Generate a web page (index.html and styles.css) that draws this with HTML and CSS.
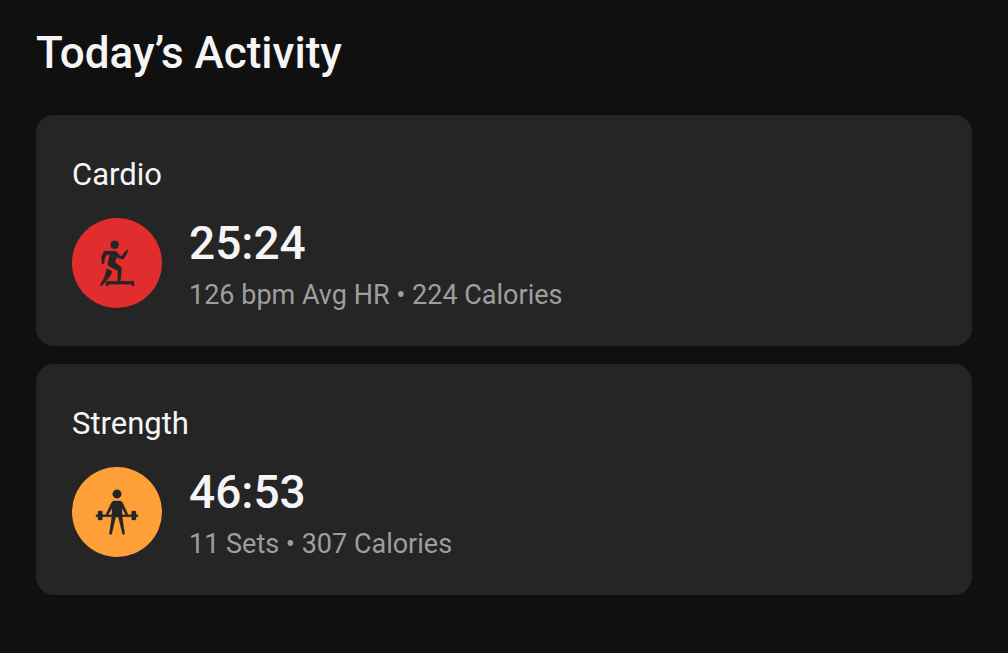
FILE: index.html
```html
<!DOCTYPE html>
<html lang="en">
<head>
    <meta charset="UTF-8">
    <meta name="viewport" content="width=device-width, initial-scale=1.0">
    <title>Today’s Activity</title>
    <link rel="stylesheet" href="styles.css">
</head>
<body>

    <main class="activity">
        <h1>Today’s Activity</h1>

        <section class="card">
            <h2>Cardio</h2>
            <div class="card-row">
                <svg class="icon cardio" viewBox="0 0 270 270" aria-hidden="true">
                    <circle cx="128" cy="80" r="12"/>
                    <path d="M100 99 L129 100 Q136 101 139 107 L144 114 L150 114 L160 100 L168 95 L166 104 L155 123 L151 124 L140 120 L134 117 L129 133 L146 146 Q149 148 149 153 L145 190 H183 Q186 190 186 193 V204 H180 V199 H109 V204 H102 V193 Q102 190 106 190 H137 L138 158 L112 145 Q106 140 108 134 L114 109 L104 110 L98 120 L96 137 L90 137 L89 117 L95 102 Q97 99 100 99 Z"/>
                    <path d="M105 152 L120 160 L116 172 L91 202 Q88 205 84 201 L98 177 Z"/>
                </svg>
                <div class="stats">
                    <p class="time">25:24</p>
                    <p class="details">126 bpm Avg HR • 224 Calories</p>
                </div>
            </div>
        </section>

        <section class="card">
            <h2>Strength</h2>
            <div class="card-row">
                <svg class="icon strength" viewBox="0 0 270 270" aria-hidden="true">
                    <circle cx="135" cy="81" r="13"/>
                    <!-- barbell -->
                    <path d="M72 143 H78 V135 Q78 132 81 132 H88 Q91 132 91 135 V143 H179 V135 Q179 132 182 132 H189 Q192 132 192 135 V143 H198 V149 H192 V156 Q192 159 189 159 H182 Q179 159 179 156 V149 H91 V156 Q91 159 88 159 H81 Q78 159 78 156 V149 H72 Z"/>
                    <path d="M126 102 H144 Q149 102 152 108 L168 142 L162 144 L150 123 L150 146 L158 201 Q157 203 152 202 L139 150 H131 L119 202 Q114 203 112 201 L120 146 L120 123 L107 145 L102 142 L118 108 Q121 102 126 102 Z"/>
                </svg>
                <div class="stats">
                    <p class="time">46:53</p>
                    <p class="details">11 Sets • 307 Calories</p>
                </div>
            </div>
        </section>
    </main>

</body>
</html>
```
FILE: styles.css
```css
body {
    font-family: Roboto, Arial, sans-serif;
    margin: 0;
    background-color: #101010;
    color: #f5f5f5;
}

h1, h2, p {
    margin: 0;
}

.activity {
    padding: 26px 36px 36px;
}

h1 {
    font-size: 44px;
    font-weight: 500;
    line-height: 54px;
    margin-bottom: 35px;
}

.card {
    padding: 36px 36px 34px;
    background-color: #252525;
    border-radius: 18px;
}

.card + .card {
    margin-top: 18px;
}

h2 {
    font-size: 31px;
    font-weight: 400;
    line-height: 48px;
    margin-bottom: 15px;
}

.card-row {
    display: flex;
    align-items: center;
    gap: 27px;
}

.icon {
    width: 90px;
    height: 90px;
    flex-shrink: 0;
    border-radius: 50%;
    fill: #252525;
    stroke: #252525;
    stroke-width: 1;
    stroke-linejoin: round;
}

.cardio {
    background-color: #e12d2d;
}

.strength {
    background-color: #ff9f38;
}

.stats {
    display: flex;
    flex-direction: column;
    gap: 8px;
    padding-top: 2px;
}

.time {
    font-size: 46px;
    font-weight: 500;
    line-height: 54px;
}

.details {
    font-size: 27px;
    line-height: 34px;
    color: #9e9e9e;
}
```
